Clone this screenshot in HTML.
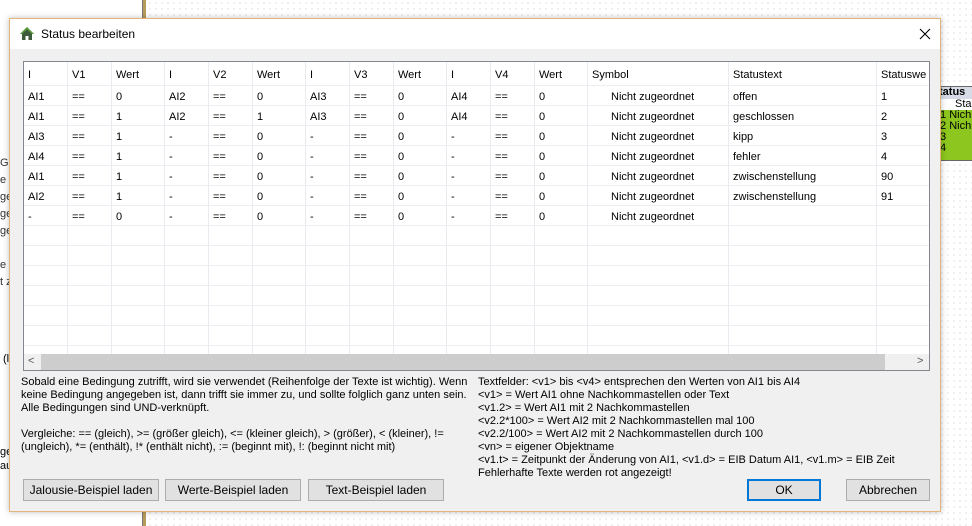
<!DOCTYPE html>
<html><head><meta charset="utf-8"><style>
*{margin:0;padding:0;box-sizing:border-box}
body{width:972px;height:526px;position:relative;overflow:hidden;background:#fff;font-family:"Liberation Sans",sans-serif;font-size:11px;color:#000}
.dots{position:absolute;left:147px;top:0;right:0;bottom:0;background-image:radial-gradient(#c8c8c8 0.6px,transparent 0.8px);background-size:6px 6px}
.vline{position:absolute;left:142px;top:0;width:4px;height:526px;background:#b89a5a;border-left:1px solid #777}
.abs{position:absolute;white-space:nowrap}
.dlg{position:absolute;left:9px;top:18px;width:932px;height:494px;background:#f0f0f0;border:1px solid #e2b57a;box-shadow:0 0 6px rgba(0,0,0,.25)}
.title{position:absolute;left:0;top:0;width:100%;height:30px;background:#fff}
.tbl{position:absolute;left:13px;top:42px;width:907px;height:310px;background:#fff;border:1px solid #828790;overflow:hidden}
.vl{position:absolute;top:0;height:292px;width:1px;background:#e8ebf0}
.hl{position:absolute;left:0;width:905px;height:1px;background:#eceef2}
.c{position:absolute;white-space:nowrap}
.btn{position:absolute;height:22px;background:#e1e1e1;border:1px solid #adadad;text-align:center;line-height:20px;font-size:12px}
.green{position:absolute;left:936px;top:86px;width:40px;height:75px;border:1px solid #666;background:#8dc61e;font-size:11px;line-height:11px}
</style></head><body>
<div class="dots"></div>
<div class="vline"></div>
<div class="abs" style="left:0;top:155px;line-height:17px;font-size:11px;color:#333">Ge<br>e<br>ge<br>ge<br>ge<br><br>e<br>t z</div>
<div class="abs" style="left:3px;top:353px;font-size:11px">(l</div>
<div class="abs" style="left:0;top:445px;line-height:14px;font-size:11px">ge<br>au</div>
<div class="green">
<div style="background:#d6dbe6;height:12px;font-weight:bold;padding-left:2px">tatus</div>
<div style="background:#fff;height:11px;padding-left:18px">Sta</div>
<div>I1 Nich<br>I2 Nich<br>I3<br>I4</div>
</div>
<div class="dlg">
<div class="title">
<svg class="abs" style="left:9px;top:7px" width="16" height="15" viewBox="0 0 16 15"><path d="M8 1 L1 8 L3 8 L3 14 L6.5 14 L6.5 10 L9.5 10 L9.5 14 L13 14 L13 8 L15 8 Z" fill="#3d5a3a"/><path d="M8 1 L1 8 L3 8 L8 3.5 L13 8 L15 8 Z" fill="#5a9a3c"/></svg>
<div class="abs" style="left:31px;top:8px;font-size:12px">Status bearbeiten</div>
<svg class="abs" style="left:909px;top:9px" width="12" height="12" viewBox="0 0 12 12"><path d="M1 1 L11 11 M11 1 L1 11" stroke="#000" stroke-width="1.1"/></svg>
</div>
<div class="tbl">
<div class="vl" style="left:43px"></div><div class="vl" style="left:87px"></div><div class="vl" style="left:140px"></div><div class="vl" style="left:184px"></div><div class="vl" style="left:228px"></div><div class="vl" style="left:281px"></div><div class="vl" style="left:325px"></div><div class="vl" style="left:369px"></div><div class="vl" style="left:422px"></div><div class="vl" style="left:466px"></div><div class="vl" style="left:510px"></div><div class="vl" style="left:563px"></div><div class="vl" style="left:704px"></div><div class="vl" style="left:852px"></div>
<div class="hl" style="top:23px"></div><div class="hl" style="top:43px"></div><div class="hl" style="top:63px"></div><div class="hl" style="top:83px"></div><div class="hl" style="top:103px"></div><div class="hl" style="top:123px"></div><div class="hl" style="top:143px"></div><div class="hl" style="top:163px"></div><div class="hl" style="top:183px"></div><div class="hl" style="top:203px"></div><div class="hl" style="top:223px"></div><div class="hl" style="top:243px"></div><div class="hl" style="top:263px"></div><div class="hl" style="top:283px"></div>
<div id="rows"></div>
<div style="position:absolute;left:0;top:292px;width:905px;height:16px;background:#f0f0f0">
<div style="position:absolute;left:17px;top:0;width:844px;height:16px;background:#cdcdcd"></div>
<div class="abs" style="left:4px;top:1px;font-size:11px;color:#555">&lt;</div>
<div class="abs" style="left:893px;top:1px;font-size:11px;color:#555">&gt;</div>
</div>
</div>
<div class="abs" style="left:11px;top:357px;line-height:13px">Sobald eine Bedingung zutrifft, wird sie verwendet (Reihenfolge der Texte ist wichtig). Wenn<br>keine Bedingung angegeben ist, dann trifft sie immer zu, und sollte folglich ganz unten sein.<br>Alle Bedingungen sind UND-verknüpft.<br><br>Vergleiche: == (gleich), &gt;= (größer gleich), &lt;= (kleiner gleich), &gt; (größer), &lt; (kleiner), !=<br>(ungleich), *= (enthält), !* (enthält nicht), := (beginnt mit), !: (beginnt nicht mit)</div>
<div class="abs" style="left:468px;top:357px;line-height:13px">Textfelder: &lt;v1&gt; bis &lt;v4&gt; entsprechen den Werten von AI1 bis AI4<br>&lt;v1&gt; = Wert AI1 ohne Nachkommastellen oder Text<br>&lt;v1.2&gt; = Wert AI1 mit 2 Nachkommastellen<br>&lt;v2.2*100&gt; = Wert AI2 mit 2 Nachkommastellen mal 100<br>&lt;v2.2/100&gt; = Wert AI2 mit 2 Nachkommastellen durch 100<br>&lt;vn&gt; = eigener Objektname<br>&lt;v1.t&gt; = Zeitpunkt der Änderung von AI1, &lt;v1.d&gt; = EIB Datum AI1, &lt;v1.m&gt; = EIB Zeit<br>Fehlerhafte Texte werden rot angezeigt!</div>
<div class="btn" style="left:13px;top:460px;width:136px">Jalousie-Beispiel laden</div>
<div class="btn" style="left:155px;top:460px;width:136px">Werte-Beispiel laden</div>
<div class="btn" style="left:298px;top:460px;width:136px">Text-Beispiel laden</div>
<div class="btn" style="left:737px;top:460px;width:74px;border:2px solid #0078d7;line-height:18px">OK</div>
<div class="btn" style="left:836px;top:460px;width:84px">Abbrechen</div>
</div>
<script>
var x=[4,48,92,145,189,233,286,330,374,427,471,515,568,709,857];
var d=[["I","V1","Wert","I","V2","Wert","I","V3","Wert","I","V4","Wert","Symbol","Statustext","Statuswe"],
["AI1","==","0","AI2","==","0","AI3","==","0","AI4","==","0","    Nicht zugeordnet","offen","1"],
["AI1","==","1","AI2","==","1","AI3","==","0","AI4","==","0","    Nicht zugeordnet","geschlossen","2"],
["AI3","==","1","-","==","0","-","==","0","-","==","0","    Nicht zugeordnet","kipp","3"],
["AI4","==","1","-","==","0","-","==","0","-","==","0","    Nicht zugeordnet","fehler","4"],
["AI1","==","1","-","==","0","-","==","0","-","==","0","    Nicht zugeordnet","zwischenstellung","90"],
["AI2","==","1","-","==","0","-","==","0","-","==","0","    Nicht zugeordnet","zwischenstellung","91"],
["-","==","0","-","==","0","-","==","0","-","==","0","    Nicht zugeordnet","",""]];
var h="";
d.forEach(function(r,i){r.forEach(function(t,j){var l=x[j];if(t.indexOf("    ")==0){t=t.trim();l+=19;}
h+='<div class="c" style="left:'+l+'px;top:'+(i==0?7:29+(i-1)*20)+'px">'+t+'</div>';});});
document.getElementById("rows").innerHTML=h;
</script>
</body></html>
